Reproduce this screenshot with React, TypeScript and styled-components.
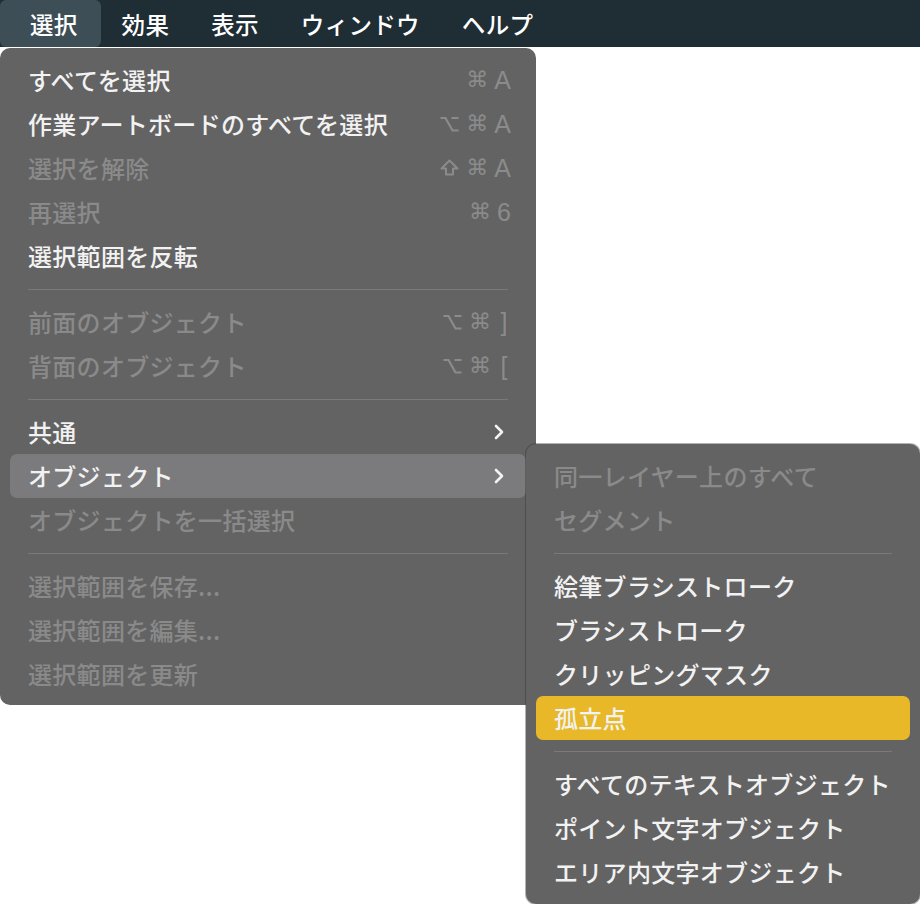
import { FC } from 'react';
import styled, { createGlobalStyle } from 'styled-components';

type Entry =
	| { kind: 'sep' }
	| { kind: 'item'; label: string; disabled?: boolean; shortcut?: string[]; sub?: boolean; active?: boolean };

const mainItems: Entry[] = [
	{ kind: 'item', label: 'すべてを選択', shortcut: ['⌘', 'A'] },
	{ kind: 'item', label: '作業アートボードのすべてを選択', shortcut: ['⌥', '⌘', 'A'] },
	{ kind: 'item', label: '選択を解除', disabled: true, shortcut: ['⇧', '⌘', 'A'] },
	{ kind: 'item', label: '再選択', disabled: true, shortcut: ['⌘', '6'] },
	{ kind: 'item', label: '選択範囲を反転' },
	{ kind: 'sep' },
	{ kind: 'item', label: '前面のオブジェクト', disabled: true, shortcut: ['⌥', '⌘', ']'] },
	{ kind: 'item', label: '背面のオブジェクト', disabled: true, shortcut: ['⌥', '⌘', '['] },
	{ kind: 'sep' },
	{ kind: 'item', label: '共通', sub: true },
	{ kind: 'item', label: 'オブジェクト', sub: true, active: true },
	{ kind: 'item', label: 'オブジェクトを一括選択', disabled: true },
	{ kind: 'sep' },
	{ kind: 'item', label: '選択範囲を保存...', disabled: true },
	{ kind: 'item', label: '選択範囲を編集...', disabled: true },
	{ kind: 'item', label: '選択範囲を更新', disabled: true },
];

const subItems: Entry[] = [
	{ kind: 'item', label: '同一レイヤー上のすべて', disabled: true },
	{ kind: 'item', label: 'セグメント', disabled: true },
	{ kind: 'sep' },
	{ kind: 'item', label: '絵筆ブラシストローク' },
	{ kind: 'item', label: 'ブラシストローク' },
	{ kind: 'item', label: 'クリッピングマスク' },
	{ kind: 'item', label: '孤立点', active: true },
	{ kind: 'sep' },
	{ kind: 'item', label: 'すべてのテキストオブジェクト' },
	{ kind: 'item', label: 'ポイント文字オブジェクト' },
	{ kind: 'item', label: 'エリア内文字オブジェクト' },
];

const topMenus = ['選択', '効果', '表示', 'ウィンドウ', 'ヘルプ'];

const Chevron: FC = () => (
	<svg width="14" height="18" viewBox="0 0 14 18" fill="none">
		<path d="M4 3l6 6-6 6" stroke="#f2f2f2" strokeWidth="2.6" strokeLinecap="round" strokeLinejoin="round" />
	</svg>
);

const ShiftIcon: FC = () => (
	<svg width="21" height="20" viewBox="0 0 21 20" fill="none">
		<path d="M10.5 2.5L2.5 10.5h4.5v6h7v-6h4.5z" stroke="#8b8b8b" strokeWidth="2" strokeLinejoin="round" />
	</svg>
);

const OptionIcon: FC = () => (
	<svg width="21" height="20" viewBox="0 0 21 20" fill="none">
		<path d="M1.5 4h5l7 12.5h6M12.5 4h7" stroke="#8b8b8b" strokeWidth="2.2" />
	</svg>
);

const renderKey = (k: string, j: number) => {
	if (k === '⇧') return <ShiftIcon key={j} />;
	if (k === '⌥') return <OptionIcon key={j} />;
	return (
		<Key key={j} $symbol={k === '⌘'}>
			{k}
		</Key>
	);
};

const MenuList: FC<{ items: Entry[]; accent: 'grey' | 'yellow' }> = ({ items, accent }) => (
	<>
		{items.map((entry, i) =>
			entry.kind === 'sep' ? (
				<Separator key={i} />
			) : (
				<Item key={i} $active={entry.active} $accent={accent}>
					<Label $disabled={entry.disabled}>{entry.label}</Label>
					{entry.shortcut && <Shortcut>{entry.shortcut.map(renderKey)}</Shortcut>}
					{entry.sub && <Chevron />}
				</Item>
			),
		)}
	</>
);

export default function App() {
	return (
		<>
			<GlobalStyle />
			<MenuBar>
				{topMenus.map((m, i) => (
					<TopItem key={m} $active={i === 0}>
						{m}
					</TopItem>
				))}
			</MenuBar>
			<Stage>
				<MainMenu>
					<MenuList items={mainItems} accent="grey" />
				</MainMenu>
				<SubMenu>
					<MenuList items={subItems} accent="yellow" />
				</SubMenu>
			</Stage>
		</>
	);
}

const GlobalStyle = createGlobalStyle`
	html, body {
		margin: 0;
		background: #ffffff;
	}
	body {
		font-family: "Noto Sans CJK JP", "Noto Sans", sans-serif;
		-webkit-font-smoothing: antialiased;
	}
`;

const MenuBar = styled.div`
	display: flex;
	align-items: stretch;
	height: 47px;
	background: #1f2d34;
`;

const TopItem = styled.div<{ $active?: boolean }>`
	display: flex;
	align-items: center;
	padding: 0 21px;
	font-size: 23.5px;
	font-weight: 500;
	letter-spacing: 0.3px;
	color: #ffffff;
	border-radius: 6px;
	background: ${({ $active }) => ($active ? '#3e4e56' : 'transparent')};
	&:first-child {
		padding: 0 23px 0 30px;
	}
`;

const Stage = styled.div`
	position: relative;
	height: 857px;
	overflow: hidden;
`;

const MainMenu = styled.div`
	margin-top: 1px;
	width: 536px;
	box-sizing: border-box;
	padding: 10px 10px 9px;
	background: #636363;
	border-radius: 10px;
`;

const SubMenu = styled.div`
	position: absolute;
	left: 526px;
	top: 397px;
	width: 394px;
	box-sizing: border-box;
	padding: 10px;
	background: #636363;
	border-radius: 10px;
	box-shadow: 0 0 0 1px rgba(40, 40, 40, 0.35);
`;

const Item = styled.div<{ $active?: boolean; $accent: 'grey' | 'yellow' }>`
	display: flex;
	align-items: center;
	justify-content: space-between;
	height: 44px;
	padding: 0 20px 0 18px;
	border-radius: 7px;
	background: ${({ $active, $accent }) => ($active ? ($accent === 'yellow' ? '#e8b829' : '#7b7b7d') : 'transparent')};
`;

const Label = styled.span<{ $disabled?: boolean }>`
	font-size: 24px;
	font-weight: 500;
	letter-spacing: 0.3px;
	line-height: 1;
	color: ${({ $disabled }) => ($disabled ? '#8a8a8a' : '#f2f2f2')};
	white-space: nowrap;
`;

const Shortcut = styled.span`
	display: flex;
	align-items: center;
	gap: 6px;
	margin-right: -5px;
	color: #8b8b8b;
`;

const Key = styled.span<{ $symbol?: boolean }>`
	font-family: ${({ $symbol }) => ($symbol ? '"DejaVu Sans", sans-serif' : '"Liberation Sans", sans-serif')};
	font-size: ${({ $symbol }) => ($symbol ? '22px' : '25px')};
	line-height: 1;
	min-width: 14px;
	text-align: center;
`;

const Separator = styled.div`
	height: 22px;
	display: flex;
	align-items: center;
	padding: 0 18px;
	&::after {
		content: '';
		flex: 1;
		height: 1px;
		background: #7a7a7a;
	}
`;
